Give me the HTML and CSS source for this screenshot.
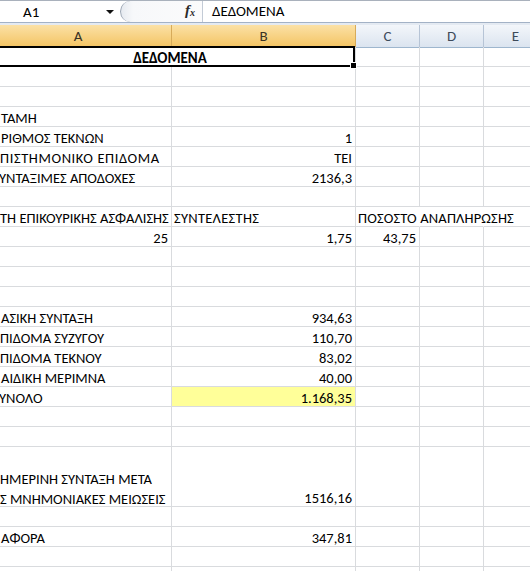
FILE: index.html
```html
<!DOCTYPE html>
<html lang="el">
<head>
<meta charset="utf-8">
<link rel="stylesheet" href="styles.css">
</head>
<body>
<div class="app">
  <div class="fbar">
    <div class="namebox"><span class="ref">A1</span><span class="arrow"></span></div>
    <div class="knob"><span class="fx"><i>f</i><sub>x</sub></span></div>
    <div class="formula">ΔΕΔΟΜΕΝΑ</div>
  </div>
  <div class="gap"></div>
  <div class="heads">
    <div class="h sel">A</div>
    <div class="h sel">B</div>
    <div class="h">C</div>
    <div class="h">D</div>
    <div class="h">E</div>
  </div>
  <div class="sheet">
    <!-- 1 -->
    <div class="c merged"><b>ΔΕΔΟΜΕΝΑ</b><span class="selbox"><span class="handle"></span></span></div>
    <div class="c"></div><div class="c"></div><div class="c"></div>
    <!-- 2 -->
    <div class="c"></div><div class="c"></div><div class="c"></div><div class="c"></div><div class="c"></div>
    <!-- 3 -->
    <div class="c"></div><div class="c"></div><div class="c"></div><div class="c"></div><div class="c"></div>
    <!-- 4 -->
    <div class="c a">ΤΑΜΗ</div><div class="c"></div><div class="c"></div><div class="c"></div><div class="c"></div>
    <!-- 5 -->
    <div class="c a">ΡΙΘΜΟΣ ΤΕΚΝΩΝ</div><div class="c r">1</div><div class="c"></div><div class="c"></div><div class="c"></div>
    <!-- 6 -->
    <div class="c a cut wide">ΠΙΣΤΗΜΟΝΙΚΟ ΕΠΙΔΟΜΑ</div><div class="c r">ΤΕΙ</div><div class="c"></div><div class="c"></div><div class="c"></div>
    <!-- 7 -->
    <div class="c a cut2">ΥΝΤΑΞΙΜΕΣ ΑΠΟΔΟΧΕΣ</div><div class="c r">2136,3</div><div class="c"></div><div class="c"></div><div class="c"></div>
    <!-- 8 -->
    <div class="c"></div><div class="c"></div><div class="c"></div><div class="c"></div><div class="c"></div>
    <!-- 9 -->
    <div class="c a cut">ΤΗ ΕΠΙΚΟΥΡΙΚΗΣ ΑΣΦΑΛΙΣΗΣ</div><div class="c loose">ΣΥΝΤΕΛΕΣΤΗΣ</div><div class="c spill loose2">ΠΟΣΟΣΤΟ ΑΝΑΠΛΗΡΩΣΗΣ</div><div class="c noright"></div><div class="c"></div>
    <!-- 10 -->
    <div class="c r">25</div><div class="c r">1,75</div><div class="c r">43,75</div><div class="c"></div><div class="c"></div>
    <!-- 11 -->
    <div class="c"></div><div class="c"></div><div class="c"></div><div class="c"></div><div class="c"></div>
    <!-- 12 -->
    <div class="c"></div><div class="c"></div><div class="c"></div><div class="c"></div><div class="c"></div>
    <!-- 13 -->
    <div class="c"></div><div class="c"></div><div class="c"></div><div class="c"></div><div class="c"></div>
    <!-- 14 -->
    <div class="c a">ΑΣΙΚΗ ΣΥΝΤΑΞΗ</div><div class="c r">934,63</div><div class="c"></div><div class="c"></div><div class="c"></div>
    <!-- 15 -->
    <div class="c a cut">ΠΙΔΟΜΑ ΣΥΖΥΓΟΥ</div><div class="c r">110,70</div><div class="c"></div><div class="c"></div><div class="c"></div>
    <!-- 16 -->
    <div class="c a cut">ΠΙΔΟΜΑ ΤΕΚΝΟΥ</div><div class="c r">83,02</div><div class="c"></div><div class="c"></div><div class="c"></div>
    <!-- 17 -->
    <div class="c a">ΑΙΔΙΚΗ ΜΕΡΙΜΝΑ</div><div class="c r">40,00</div><div class="c"></div><div class="c"></div><div class="c"></div>
    <!-- 18 -->
    <div class="c a cut2">ΥΝΟΛΟ</div><div class="c r yellow">1.168,35</div><div class="c"></div><div class="c"></div><div class="c"></div>
    <!-- 19 -->
    <div class="c"></div><div class="c"></div><div class="c"></div><div class="c"></div><div class="c"></div>
    <!-- 20 -->
    <div class="c"></div><div class="c"></div><div class="c"></div><div class="c"></div><div class="c"></div>
    <!-- 21 (tall, wrapped) -->
    <div class="c a cut tall"><div class="wrap">ΗΜΕΡΙΝΗ ΣΥΝΤΑΞΗ ΜΕΤΑ<br>Σ ΜΝΗΜΟΝΙΑΚΕΣ ΜΕΙΩΣΕΙΣ</div></div><div class="c r tall">1516,16</div><div class="c tall"></div><div class="c tall"></div><div class="c tall"></div>
    <!-- 22 -->
    <div class="c"></div><div class="c"></div><div class="c"></div><div class="c"></div><div class="c"></div>
    <!-- 23 -->
    <div class="c a">ΑΦΟΡΑ</div><div class="c r">347,81</div><div class="c"></div><div class="c"></div><div class="c"></div>
    <!-- 24 -->
    <div class="c"></div><div class="c"></div><div class="c"></div><div class="c"></div><div class="c"></div>
    <!-- 25 -->
    <div class="c"></div><div class="c"></div><div class="c"></div><div class="c"></div><div class="c"></div>
  </div>
</div>
</body>
</html>
```
FILE: styles.css
```css
html, body {
  margin: 0;
  padding: 0;
  background: #ffffff;
}
body {
  width: 530px;
  height: 571px;
  overflow: hidden;
  font-family: "Carlito", "Liberation Sans", sans-serif;
  font-size: 14.5px;
  color: #000;
}
.app {
  width: 530px;
  overflow: hidden;
}

/* formula bar */
.fbar {
  display: flex;
  height: 23px;
  box-sizing: border-box;
  border-top: 1px solid #a9b1bc;
  border-bottom: 1px solid #a3b2c6;
  background: #fff;
}
.namebox {
  width: 120px;
  display: flex;
  align-items: center;
}
.ref {
  margin-left: 23px;
  line-height: 20px;
  font-size: 15px;
  color: #000;
}
.arrow {
  margin-left: auto;
  margin-right: 6px;
  width: 0;
  height: 0;
  border-left: 4px solid transparent;
  border-right: 4px solid transparent;
  border-top: 4px solid #111;
}
.knob {
  width: 83px;
  box-sizing: border-box;
  border-left: 1px solid #9aa4b2;
  border-top-left-radius: 11px;
  border-bottom-left-radius: 11px;
  background: linear-gradient(90deg, #e6eaf0 0, #f7f8fa 12px, #fbfbfc 100%);
  border-right: 1px solid #c3cbd6;
  display: flex;
  align-items: center;
  justify-content: flex-end;
  padding-right: 7px;
}
.fx {
  font-family: "Liberation Serif", serif;
  font-weight: bold;
  font-size: 15px;
  line-height: 16px;
  color: #2a2a2a;
}
.fx sub {
  font-style: italic;
  font-size: 10px;
  vertical-align: -1px;
}
.formula {
  padding-left: 9px;
  line-height: 20px;
  font-size: 15px;
  white-space: nowrap;
  color: #000;
}
.gap {
  height: 2px;
  background: #e4eaf2;
}

/* column headers */
.heads {
  display: grid;
  grid-template-columns: 187px 184px 64px 64px 64px;
  margin-left: -15px;
  height: 22px;
}
.h {
  box-sizing: border-box;
  border-right: 1px solid #b6c4d6;
  border-bottom: 1px solid #9eb6ce;
  background: linear-gradient(#f3f6fa, #dbe4ef);
  color: #3d4a5a;
  text-align: center;
  line-height: 22px;
  font-size: 15px;
}
.h.sel {
  background: linear-gradient(#fbe1a6, #f4c463);
  border-right-color: #d7ab5a;
  border-bottom-color: #c99a45;
  color: #3a3325;
}

/* sheet grid */
.sheet {
  display: grid;
  grid-template-columns: 187px 184px 64px 64px 64px;
  grid-auto-rows: 20px;
  margin-left: -15px;
}
.c {
  box-sizing: border-box;
  border-right: 1px solid #d9dbde;
  border-bottom: 1px solid #d9dbde;
  display: flex;
  align-items: flex-end;
  padding: 0 2px;
  line-height: 15px;
  white-space: nowrap;
  overflow: hidden;
  color: #000;
}
.c.a { padding-left: 16px; }
.c.a.cut { padding-left: 15px; }
.c.a.cut2 { padding-left: 14px; }
.c.wide { letter-spacing: 0.6px; }
.c.loose { letter-spacing: 0.3px; }
.c.loose2 { letter-spacing: 0.15px; }
.c.r {
  justify-content: flex-end;
  padding-right: 3px;
}
.c.yellow { background: #ffff99; }
.c.spill {
  overflow: visible;
  border-right-color: transparent;
  position: relative;
  z-index: 1;
}
.c.noright { border-right-color: transparent; }

.c.merged {
  grid-column: span 2;
  justify-content: center;
  overflow: visible;
  position: relative;
  font-size: 15px;
}
.c.merged b { font-weight: bold; }
.selbox {
  position: absolute;
  top: -1px;
  left: 0;
  right: 0;
  bottom: -1px;
  border: 2px solid #000;
  border-left: none;
  z-index: 3;
}
.handle {
  position: absolute;
  right: -4px;
  bottom: -4px;
  width: 5px;
  height: 5px;
  background: #000;
  border: 1px solid #fff;
}

.c.tall { grid-row: span 3; }
.c.a.tall .wrap {
  line-height: 20px;
  margin-bottom: -3px;
}
```
